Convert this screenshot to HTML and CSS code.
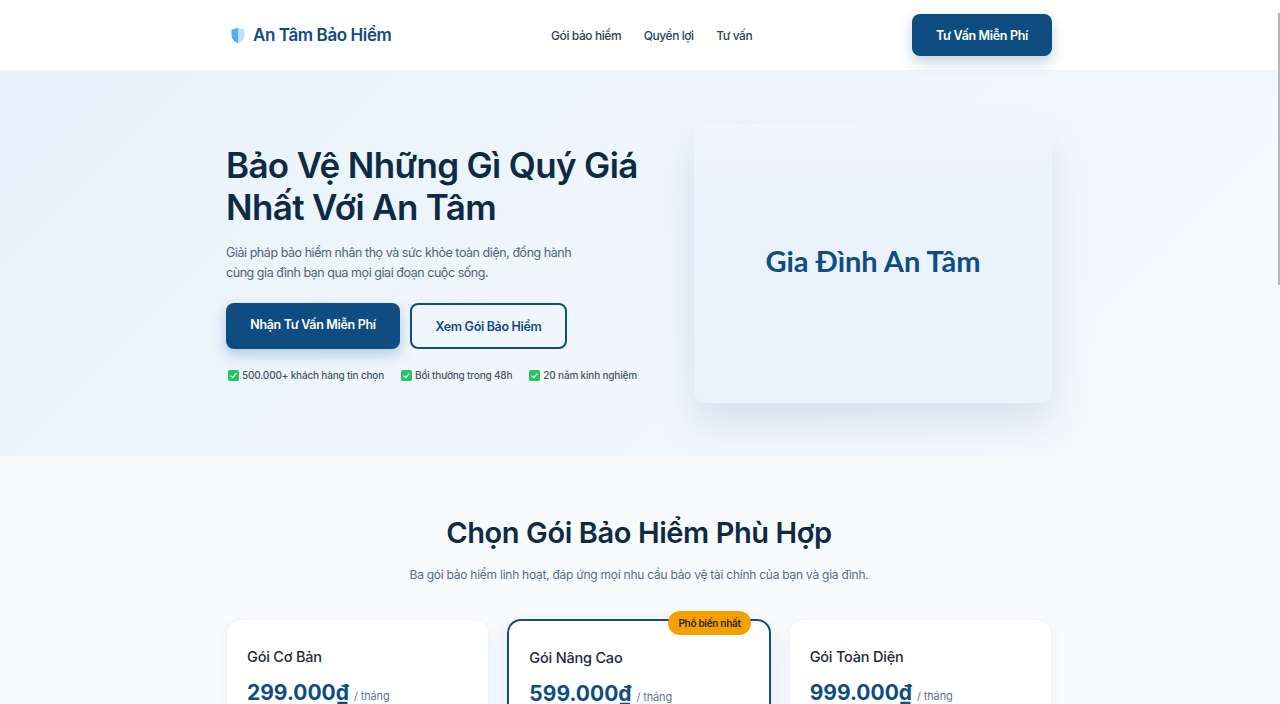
FILE: index.html
```html
<!DOCTYPE html>
<html lang="vi">
<head>
  <meta charset="UTF-8" />
  <meta name="viewport" content="width=device-width, initial-scale=1.0" />
  <title>An Tâm Bảo Hiểm</title>
  <link rel="stylesheet" href="styles.css">
</head>
<body>

  <div class="scroll-thumb"></div>

  <header class="site-header">
    <div class="container header-row">
      <a class="logo" href="#">
        <svg class="logo-icon" width="14" height="17" viewBox="0 0 14 17">
          <path d="M7 0.5 C9 1.6 11 2.2 13.5 2.5 V8 C13.5 12 10.5 15 7 16.5 Z" fill="#bfe0f7" />
          <path d="M7 0.5 C5 1.6 3 2.2 0.5 2.5 V8 C0.5 12 3.5 15 7 16.5 Z" fill="#4fb0ec" />
        </svg>
        <span>An Tâm Bảo Hiểm</span>
      </a>
      <nav class="nav">
        <a href="#">Gói bảo hiểm</a>
        <a href="#">Quyền lợi</a>
        <a href="#">Tư vấn</a>
      </nav>
      <a class="btn btn-primary btn-header" href="#">Tư Vấn Miễn Phí</a>
    </div>
  </header>

  <section class="hero">
    <div class="container hero-row">
      <div class="hero-text">
        <h1>Bảo Vệ Những Gì Quý Giá Nhất Với An Tâm</h1>
        <p class="hero-desc">Giải pháp bảo hiểm nhân thọ và sức khỏe toàn diện, đồng hành cùng gia đình bạn qua mọi giai đoạn cuộc sống.</p>
        <div class="hero-actions">
          <a class="btn btn-primary btn-large" href="#"><span class="btn-lift">Nhận Tư Vấn Miễn Phí</span></a>
          <a class="btn btn-outline btn-large" href="#">Xem Gói Bảo Hiểm</a>
        </div>
        <ul class="trust-list">
          <li><svg width="11" height="11" viewBox="0 0 11 11"><rect width="11" height="11" rx="2" fill="#22c55e" /><path d="M2.6 5.6 L4.7 7.6 L8.4 3.4" fill="none" stroke="#fff" stroke-width="1.3" /></svg>500.000+ khách hàng tin chọn</li>
          <li><svg width="11" height="11" viewBox="0 0 11 11"><rect width="11" height="11" rx="2" fill="#22c55e" /><path d="M2.6 5.6 L4.7 7.6 L8.4 3.4" fill="none" stroke="#fff" stroke-width="1.3" /></svg>Bồi thường trong 48h</li>
          <li><svg width="11" height="11" viewBox="0 0 11 11"><rect width="11" height="11" rx="2" fill="#22c55e" /><path d="M2.6 5.6 L4.7 7.6 L8.4 3.4" fill="none" stroke="#fff" stroke-width="1.3" /></svg>20 năm kinh nghiệm</li>
        </ul>
      </div>
      <div class="hero-card">Gia Đình An Tâm</div>
    </div>
  </section>

  <section class="plans">
    <div class="container">
      <h2>Chọn Gói Bảo Hiểm Phù Hợp</h2>
      <p class="plans-desc">Ba gói bảo hiểm linh hoạt, đáp ứng mọi nhu cầu bảo vệ tài chính của bạn và gia đình.</p>
      <div class="plan-grid">
        <div class="plan-card">
          <h3>Gói Cơ Bản</h3>
          <div class="price">299.000₫ <span>/ tháng</span></div>
        </div>
        <div class="plan-card plan-featured">
          <div class="badge">Phổ biến nhất</div>
          <h3>Gói Nâng Cao</h3>
          <div class="price">599.000₫ <span>/ tháng</span></div>
        </div>
        <div class="plan-card">
          <h3>Gói Toàn Diện</h3>
          <div class="price">999.000₫ <span>/ tháng</span></div>
        </div>
      </div>
    </div>
  </section>

</body>
</html>
```

FILE: styles.css
```css
body {
  margin: 0;
  font-family: 'Inter', 'Noto Sans', sans-serif;
  color: #0f2a44;
  background-color: #f8fafc;
}

a {
  text-decoration: none;
  color: inherit;
}

.container {
  width: 826px;
  margin-left: 226px;
}

/* thin scrollbar thumb on the window edge */
.scroll-thumb {
  position: fixed;
  top: 13px;
  right: 0;
  width: 2px;
  height: 272px;
  background-color: #b4b8bd;
  z-index: 10;
}

/* header */
.site-header {
  height: 71px;
  background-color: #fff;
  border-bottom: 1px solid #eef1f5;
  box-sizing: border-box;
}

.header-row {
  display: flex;
  align-items: center;
  height: 70px;
}

.logo {
  display: flex;
  align-items: center;
  gap: 8px;
  width: 325px;
  padding-left: 5px;
  box-sizing: border-box;
  font-size: 17px;
  font-weight: 600;
  letter-spacing: -0.4px;
  color: #0f4c81;
}

.nav {
  display: flex;
  gap: 22.5px;
  flex: 1;
  font-size: 12px;
  font-weight: 500;
  letter-spacing: -0.42px;
  color: #334155;
}

.btn {
  display: flex;
  align-items: center;
  justify-content: center;
  box-sizing: border-box;
  border-radius: 8px;
  font-weight: 600;
  letter-spacing: -0.33px;
}

.btn-primary {
  background-color: #0f4c81;
  color: #fff;
  box-shadow: 0 6px 14px rgba(15, 76, 129, 0.25);
}

.btn-outline {
  border: 2px solid #0f4c81;
  color: #0f4c81;
}

.btn-header {
  width: 140px;
  height: 42px;
  font-size: 12.5px;
}

.btn-large {
  height: 46px;
  font-size: 12.5px;
}

.btn-lift {
  padding-bottom: 3px;
}

/* hero */
.hero {
  height: 385px;
  background: linear-gradient(135deg, #e8f2fc 0%, #f7fafc 100%);
}

.hero-row {
  display: flex;
  justify-content: space-between;
  padding-top: 73px;
}

.hero-text {
  width: 420px;
}

h1 {
  margin: 0 0 15px;
  font-size: 35px;
  line-height: 42px;
  font-weight: 600;
  letter-spacing: -0.65px;
  color: #0f2a44;
}

.hero-desc {
  margin: 0 0 20px;
  width: 360px;
  font-size: 12.5px;
  line-height: 20px;
  letter-spacing: -0.45px;
  color: #52637a;
}

.hero-actions {
  display: flex;
  gap: 10px;
  margin-bottom: 20px;
}

.hero-actions .btn-primary {
  width: 174px;
}

.hero-actions .btn-outline {
  width: 157px;
}

.trust-list {
  display: flex;
  gap: 17px;
  margin: 0;
  padding: 0 0 0 2px;
  list-style: none;
  font-size: 10px;
  font-weight: 500;
  letter-spacing: -0.18px;
  color: #475569;
  white-space: nowrap;
}

.trust-list li {
  display: flex;
  align-items: center;
  gap: 3px;
}

.hero-card {
  display: flex;
  align-items: center;
  justify-content: center;
  width: 358px;
  height: 279px;
  margin-top: -20px;
  padding-bottom: 6px;
  box-sizing: border-box;
  border-radius: 12px;
  background: linear-gradient(180deg, #eff5fc 0%, #eaf2fb 25%);
  box-shadow: 0 20px 40px rgba(15, 76, 129, 0.13);
  font-family: 'Lato', sans-serif;
  font-size: 29px;
  font-weight: 700;
  color: #0f4c81;
}

/* plans */
.plans {
  padding-top: 57px;
}

h2 {
  margin: 0 0 13px;
  text-align: center;
  font-size: 29px;
  line-height: 40px;
  font-weight: 600;
  letter-spacing: -0.4px;
  color: #0f2a44;
}

.plans-desc {
  margin: 0 0 35px;
  text-align: center;
  font-size: 12px;
  line-height: 18px;
  letter-spacing: -0.25px;
  color: #5b6b80;
}

.plan-grid {
  display: grid;
  grid-template-columns: repeat(3, 1fr);
  gap: 18px;
  align-items: start;
}

.plan-card {
  position: relative;
  height: 260px;
  padding: 27px 20px;
  box-sizing: border-box;
  border: 1px solid #f0f3f7;
  border-radius: 14px;
  background-color: #fff;
  box-shadow: 0 4px 14px rgba(15, 76, 129, 0.04);
}

.plan-featured {
  border: 2px solid #0f4c81;
  box-shadow: 0 8px 24px rgba(15, 76, 129, 0.1);
}

.badge {
  position: absolute;
  top: -10px;
  right: 18px;
  padding: 0 10px;
  height: 24px;
  line-height: 24px;
  border-radius: 12px;
  background-color: #f5a000;
  font-size: 10px;
  font-weight: 600;
  letter-spacing: -0.3px;
  color: #1e293b;
}

h3 {
  margin: 0 0 11px;
  font-size: 14.5px;
  line-height: 20px;
  font-weight: 500;
  letter-spacing: -0.2px;
  color: #1e293b;
}

.price {
  font-size: 21px;
  line-height: 30px;
  font-weight: 700;
  color: #0f4c81;
}

.price span {
  font-size: 11px;
  font-weight: 400;
  letter-spacing: -0.15px;
  color: #64748b;
}
```
